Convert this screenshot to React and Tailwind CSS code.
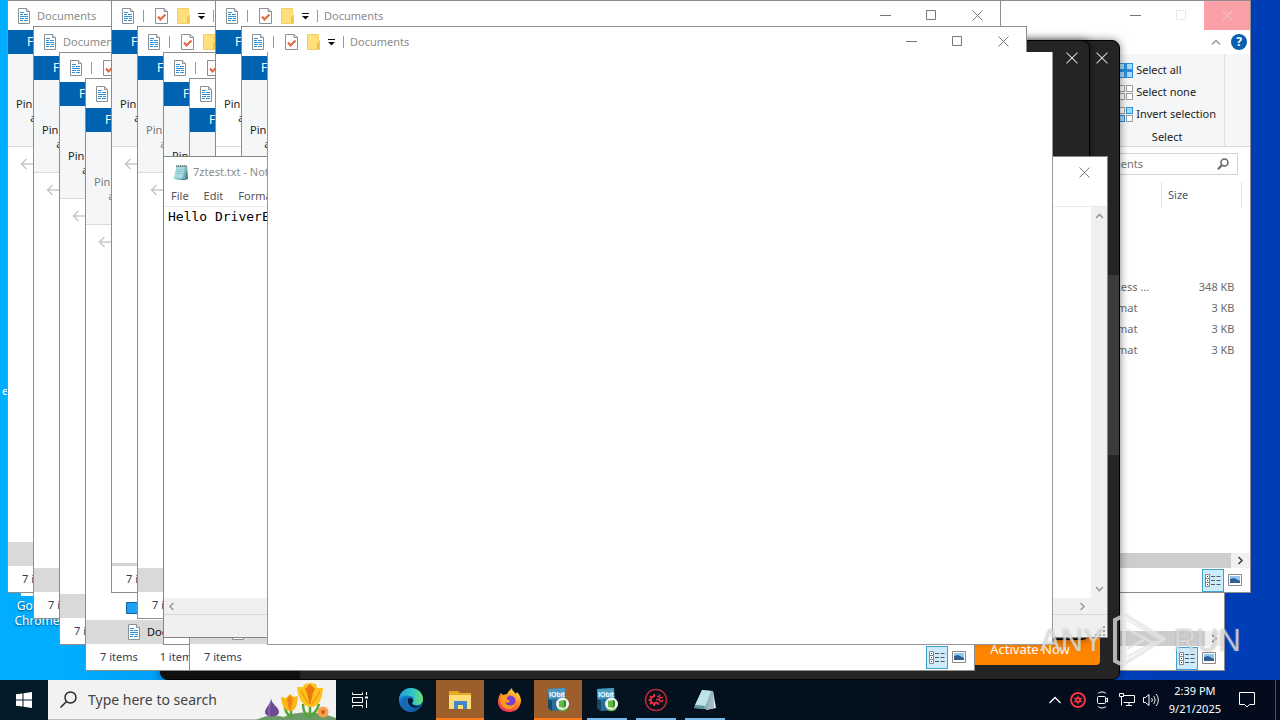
import React from "react";

const DocIcon = () => (
  <svg width="14" height="16" viewBox="0 0 14 16" className="shrink-0" aria-hidden="true">
    <path d="M1.5 .5h8l3 3v12h-11z" fill="#fff" stroke="#8a8f94" />
    <path d="M9.500.5v3h3" fill="#e4e8eb" stroke="#8a8f94" />
    <path d="M3 4.500h4M3 6.500h3M7 6.500h4M3 8.500h8M3 10.500h4M8 10.500h3M3 12.500h3M7 12.500h4" stroke="#2f8fd6" />
  </svg>
);

const CheckIcon = () => (
  <svg width="13" height="16" viewBox="0 0 13 16" className="shrink-0" aria-hidden="true">
    <path d="M.5 .5h8.500l3.500 3v12H.5z" fill="#fdfdfd" stroke="#8a8f94" />
    <path d="M9 .5v3h3.500" fill="none" stroke="#8a8f94" />
    <path d="M3 8.500l2.500 3 5-5" fill="none" stroke="#e0683f" strokeWidth="2" />
  </svg>
);

const FolderIcon = () => (
  <svg width="13" height="16" viewBox="0 0 13 16" className="shrink-0" aria-hidden="true">
    <path d="M.5 .5h11v5l1 1v9H.5z" fill="#ffe07c" stroke="#f2cf62" />
    <path d="M10 15V9l2-2v8z" fill="#f0c545" />
  </svg>
);

const MinGlyph = () => (
  <svg width="11" height="11" viewBox="0 0 11 11" aria-hidden="true">
    <path d="M0 5.500h11" stroke="currentColor" />
  </svg>
);
const MaxGlyph = () => (
  <svg width="11" height="11" viewBox="0 0 11 11" aria-hidden="true">
    <path d="M.5.5h9v9h-9z" fill="none" stroke="currentColor" />
  </svg>
);
const CloseGlyph = ({ size = 11 }) => (
  <svg width={size} height={size} viewBox="0 0 11 11" aria-hidden="true">
    <path d="M.5.5l10 10M10.500.5l-10 10" stroke="currentColor" fill="none" />
  </svg>
);

const Chevron = ({ d, className = "text-[#9b9b9b]" }) => (
  <svg width="9" height="9" viewBox="0 0 9 9" className={className} aria-hidden="true">
    <path d={d} fill="none" stroke="currentColor" strokeWidth="1.600" />
  </svg>
);
const LEFT = "M6.500 1L3 4.500 6.500 8";
const RIGHT = "M2.500 1L6 4.500 2.500 8";
const UP = "M1 6L4.500 2.500 8 6";
const DOWN = "M1 3L4.500 6.500 8 3";

function Caption({ hot }) {
  return (
    <div className="ml-auto flex h-full shrink-0 text-[#777]">
      <button aria-label="Minimize" className="grid w-[45px] place-items-center"><MinGlyph /></button>
      <button aria-label="Maximize" className={hot ? "grid w-[46px] place-items-center text-[#e8e8e8]" : "grid w-[46px] place-items-center"}><MaxGlyph /></button>
      <button aria-label="Close" className={hot ? "grid w-[46px] place-items-center bg-[#f9a0a8] text-[#f7c9cd]" : "grid w-[46px] place-items-center"}><CloseGlyph /></button>
    </div>
  );
}

function ViewButtons() {
  return (
    <div className="ml-auto flex h-full items-center">
      <button aria-label="Details" className="grid h-[23px] w-[22px] place-items-center border border-[#3f9fcf] bg-[#ccecfb]">
        <svg width="16" height="13" viewBox="0 0 16 13" aria-hidden="true">
          <path d="M.5.5h4v12h-4zM.5 4.500h4M.5 8.500h4" fill="#fff" stroke="#858585" />
          <path d="M2 2.500h1M2 6.500h1M2 10.500h1" stroke="#333" />
          <path d="M6 2.500h4M11.500 2.500h4M6 6.500h4M11.500 6.500h4M6 10.500h4M11.500 10.500h4" stroke="#555b66" />
        </svg>
      </button>
      <button aria-label="Large icons" className="mr-1 grid h-[23px] w-[22px] place-items-center">
        <svg width="14" height="12" viewBox="0 0 14 12" aria-hidden="true">
          <path d="M.5.5h13v11H.5z" fill="#fff" stroke="#8a8a8a" />
          <path d="M2 2h10v7H2z" fill="#8fc8ee" />
          <path d="M2 5l4-1 6 3v2H2z" fill="#2d5f92" />
        </svg>
      </button>
    </div>
  );
}

function Explorer({ place, compact, dim, plain, bare, hideSelection, line, selected, note, hot, children }) {
  return (
    <section className={`absolute flex h-[593px] w-[786px] flex-col overflow-hidden border border-[#8d8d8d] bg-white text-[11px] leading-4 ${place}`}>
      <header className="flex h-[29px] shrink-0 items-center pl-[9px] text-[#8c8c8c]">
        <DocIcon />
        {!compact && (
          <div className="flex items-center">
            <i className="ml-2 h-3 w-px bg-[#999]" />
            <button aria-label="Properties" className="ml-[11px]"><CheckIcon /></button>
            <button aria-label="New folder" className="ml-[9px]"><FolderIcon /></button>
            <button aria-label="Customize toolbar" className="ml-2">
              <svg width="7" height="8" viewBox="0 0 7 8" aria-hidden="true"><path d="M0 1.500h7" stroke="#111" /><path d="M0 4h7L3.500 7.500z" fill="#111" /></svg>
            </button>
            <i className="ml-2 h-3 w-px bg-[#999]" />
          </div>
        )}
        <span className="ml-1.5">Documents</span>
        <Caption hot={hot} />
      </header>
      <div className="flex h-6 shrink-0 items-center bg-white">
        <button className="h-full w-14 bg-[#0063b1] pl-[19px] text-left text-[12px] text-white">File</button>
        {hot && (
          <div className="ml-auto flex items-center gap-2.5 pr-[3px]">
            <svg width="10" height="7" viewBox="0 0 10 7" fill="none" stroke="#999" strokeWidth="1.500" aria-hidden="true"><path d="M1 5.500l4-4 4 4" /></svg>
            <button aria-label="Help" className="grid size-4 place-items-center rounded-full bg-[#0b5fae] text-[12px] font-bold text-white">?</button>
          </div>
        )}
      </div>
      <div className={`flex h-[93px] shrink-0 border-b border-[#d8dadc] ${plain ? "bg-white" : "bg-[#f5f6f7]"} ${dim ? "text-[#777]" : "text-[#222]"}`}>
        {!bare && <button className="mt-[43px] ml-1 h-fit w-[70px] text-center leading-[14px]">Pin to Quick access</button>}
        {hot && (
          <div className="ml-auto flex">
            <div className="flex flex-col border-r border-[#dfe1e3] pt-[5px] pr-2">
              <SelectItem kind="all" label="Select all" />
              <SelectItem kind="none" label="Select none" />
              <SelectItem kind="invert" label="Invert selection" />
              <p className="pt-1 text-center">Select</p>
            </div>
            <div className="w-[25px]" />
          </div>
        )}
      </div>
      <div className="flex h-[34px] shrink-0 items-center pl-3">
        <button aria-label="Back">
          <svg width="14" height="12" viewBox="0 0 14 12" aria-hidden="true"><path d="M14 6H1.500M6.500 1l-5 5 5 5" fill="none" stroke="#c8c8c8" strokeWidth="1.500" /></svg>
        </button>
        {hot && (
          <label className="mr-3 ml-auto flex h-[22px] w-[210px] items-center border border-[#d3d3d3] pr-2 pl-[17px]">
            <input aria-label="Search Documents" placeholder="Search Documents" className="min-w-0 flex-1 bg-transparent placeholder:text-[#777] placeholder:opacity-100" />
            <svg width="12" height="12" viewBox="0 0 12 12" aria-hidden="true"><circle cx="7.500" cy="4.500" r="3.500" fill="none" stroke="#666" strokeWidth="1.500" /><path d="M5 7L1 11.200" stroke="#666" strokeWidth="2" /></svg>
          </label>
        )}
      </div>
      <div className="flex min-h-0 flex-1 flex-col">
        {children}
        {!hideSelection && (
          <div className="mt-auto w-[141px]">
            {selected && (
              <div className="flex h-6 items-center pl-10">
                <svg width="14" height="12" viewBox="0 0 14 12" aria-hidden="true"><path d="M.5.5h13v11H.5z" fill="#1e9ef5" stroke="#12629c" /></svg>
              </div>
            )}
            <div className="flex h-6 items-center gap-1.5 bg-[#d9d9d9] pl-[41px] text-[#111]">
              {selected && <DocIcon />}
              {note && <span>Documents</span>}
            </div>
          </div>
        )}
        {line && <div className="mt-auto h-[3px] bg-[#d4d4d4]" />}
      </div>
      <footer className={`flex shrink-0 items-center gap-[22px] pl-3.5 text-[#333c58] ${hot === undefined ? "h-[26px]" : "h-6"}`}>
        <span>7 items</span>
        {note && <span>{note}</span>}
        <ViewButtons />
      </footer>
    </section>
  );
}

function SelectItem({ kind, label }) {
  const on = "#a8dafa", off = "#fff";
  const f = kind === "all" ? [on, on, on, on] : kind === "none" ? [off, off, off, off] : [off, on, on, off];
  return (
    <button className="flex h-[22px] items-center gap-[3px] text-left">
      <svg width="15" height="15" viewBox="0 0 15 15" aria-hidden="true">
        {kind === "all" && <path d="M0 0h15v15H0z" fill="#2d8fdb" />}
        {f.map((c, i) => (
          <rect key={i} x={(i % 2) * 8 + 0.5} y={Math.floor(i / 2) * 8 + 0.5} width="6" height="6" fill={c} stroke={c === on ? "#2d8fdb" : "#a0a0a0"} />
        ))}
      </svg>
      {label}
    </button>
  );
}

const FILES = [
  ["File folder", ""], ["File folder", ""], ["File folder", ""],
  ["Microsoft Access ...", "348 KB"],
  ["Rich Text Format", "3 KB"], ["Rich Text Format", "3 KB"], ["Rich Text Format", "3 KB"],
];

function HScroll() {
  return (
    <div className="mt-auto flex h-[15px] shrink-0 bg-[#f0f0f0]">
      <div className="flex-1 bg-[#cdcdcd]" />
      <button aria-label="Scroll right" className="grid w-[19px] place-items-center"><Chevron d={RIGHT} className="text-[#444]" /></button>
    </div>
  );
}

function FileTable() {
  return (
    <table className="mt-px mr-2 ml-auto border-collapse text-[#6b6b6b]">
      <thead>
        <tr className="h-[26px] text-[#44587c]">
          <th className="w-[116px] pl-1.5 text-left font-normal">Type</th>
          <th className="w-20 border-x border-[#e2e2e2] pl-1.5 text-left font-normal">Size</th>
        </tr>
      </thead>
      <tbody>
        <tr className="h-[5px]"><td colSpan={2} /></tr>
        {FILES.map(([type, size], i) => (
          <tr key={i} className="h-[21px]">
            <td className="pl-1.5">{type}</td>
            <td className="pr-[7px] text-right">{size}</td>
          </tr>
        ))}
      </tbody>
    </table>
  );
}

function DarkWindow({ place, children }) {
  return (
    <section className={`absolute flex w-[960px] flex-col overflow-hidden rounded-lg border border-black bg-[#242424] shadow-[0_0_8px_rgba(0,0,0,0.5)] ${place}`}>
      <header className="flex h-9 shrink-0 justify-end pt-[11px] pr-[11px] text-[#d0d0d0]">
        <button aria-label="Close" className="h-fit"><CloseGlyph size={12} /></button>
      </header>
      {children}
    </section>
  );
}

function NotepadIcon({ className }) {
  return (
    <svg viewBox="0 0 18 18" className={className} aria-hidden="true">
      <path d="M5 2h11l-1.500 14H2z" fill="#6fb4bd" />
      <path d="M5 3h9L11 15H2z" fill="#a7dce0" />
      <path d="M16 3l1 13-3 1-11-.5 11-.8z" fill="#477f88" />
      <path d="M5 1v2M7 1v2M9 1v2M11 1v2M13 1v2M15 1v2" stroke="#666" />
      <path d="M5 6h8M4.500 8h8M4 10h8" stroke="#82c2ca" strokeWidth=".7" />
    </svg>
  );
}

function NotepadTaskIcon() {
  return (
    <svg width="24" height="24" viewBox="0 0 24 24" aria-hidden="true">
      <path d="M9 2l11 1-7 18L1 20z" fill="#8fc4cc" />
      <path d="M9 2l9 1-6 15-10-1z" fill="#bfe3e6" />
      <path d="M2 17l10 1-1 3L1 20z" fill="#5c929c" />
      <path d="M20 3l3 17-10 2z" fill="#e3eef0" />
      <path d="M20 3l1 17-8 2z" fill="#a3b9bd" />
    </svg>
  );
}

function Notepad() {
  return (
    <section className="absolute top-[156px] left-[163px] flex h-[482px] w-[945px] flex-col border border-[#858585] bg-white text-[12px]">
      <header className="flex h-[30px] shrink-0 items-center pl-2 text-[11px] text-[#8c8c8c]">
        <NotepadIcon className="size-[17px]" />
        <span className="ml-1">7ztest.txt - Notepad</span>
        <Caption />
      </header>
      <nav className="flex h-5 shrink-0 items-center gap-[15px] border-b border-[#ececec] pl-[7px] text-[11px] text-[#555]">
        {["File", "Edit", "Format", "View", "Help"].map((m) => <button key={m}>{m}</button>)}
      </nav>
      <div className="flex min-h-0 flex-1">
        <textarea aria-label="Text editor" readOnly value="Hello DriverEasy" className="flex-1 resize-none bg-white px-1 pt-px font-['DejaVu_Sans_Mono',monospace] text-[13px] leading-[17px] text-black outline-none" />
        <div className="flex w-4 flex-col items-center justify-between bg-[#f0f0f0] py-[5px]">
          <Chevron d={UP} /><Chevron d={DOWN} />
        </div>
      </div>
      <div className="flex h-4 shrink-0 items-center justify-between bg-[#f0f0f0] pr-5 pl-[3px]">
        <Chevron d={LEFT} /><Chevron d={RIGHT} />
      </div>
      <footer className="flex h-[23px] shrink-0 items-end justify-end border-t border-[#d7d7d7] bg-[#f0f0f0] p-px">
        <svg width="11" height="11" viewBox="0 0 11 11" aria-hidden="true"><path d="M9 1v2M9 5v2M9 9v2M5 5v2M5 9v2M1 9v2" stroke="#aaa" strokeWidth="2" /></svg>
      </footer>
    </section>
  );
}

const Edge = () => (
  <svg width="26" height="26" viewBox="0 0 26 26" aria-hidden="true">
    <defs>
      <linearGradient id="eg" x1="0" x2="1"><stop offset="0" stopColor="#1c9de0" /><stop offset=".6" stopColor="#34c9c0" /><stop offset="1" stopColor="#6fe068" /></linearGradient>
      <linearGradient id="eb" x1="0" y1="0" x2="1" y2="1"><stop offset="0" stopColor="#1b8fe0" /><stop offset="1" stopColor="#0c4f98" /></linearGradient>
    </defs>
    <circle cx="13" cy="13" r="12" fill="url(#eb)" />
    <path d="M1 12C2 5 7 1 13 1c7 0 12 5 12 11 0 4-3 6-6 6-3 0-5-1-4-3 2-3 0-6-4-6-4-1-8 0-10 3z" fill="url(#eg)" />
    <path d="M10 12c-1 6 4 10 11 8l3-2c-1 1-7 3-10-1-1-1 1-2 1-4-1-2-4-3-5-1z" fill="#031621" />
    <path d="M10 11c-4 4-2 12 5 14-8 0-12-4-12-8 0-4 4-6 7-6z" fill="#1668b4" />
  </svg>
);
const ExplorerIcon = () => (
  <svg width="24" height="22" viewBox="0 0 24 22" aria-hidden="true">
    <path d="M1 2h9l2 2h11v16H1z" fill="#e6a91f" />
    <path d="M1 6h22v14H1z" fill="#ffdc76" />
    <path d="M6 12h13v8h-4v-4h-5v4H6z" fill="#3f87c9" />
  </svg>
);
const Firefox = () => (
  <svg width="25" height="25" viewBox="0 0 25 25" aria-hidden="true">
    <defs><linearGradient id="ff" x1=".8" y1="0" x2=".3" y2="1"><stop offset="0" stopColor="#ffe14a" /><stop offset=".5" stopColor="#ff8a1e" /><stop offset="1" stopColor="#f0275e" /></linearGradient></defs>
    <path d="M4 5l2 2 4-1 2-3 3-3c0 3 3 4 4 6l1-2c4 4 5 9 3 13-2 5-6 7-11 7C6 24 1 20 1 14c0-4 1-6 3-9z" fill="url(#ff)" />
    <circle cx="13" cy="13" r="5.500" fill="#7a3fd0" />
    <path d="M4 8c3-2 6-1 8 1-3 0-3 2-1 3l2 1c-1 2-4 2-5 1 1 4 7 5 10 1 0 5-4 7-8 6-5-1-8-7-6-13z" fill="#ff9a20" />
  </svg>
);
const Iobit = () => (
  <svg width="24" height="26" viewBox="0 0 24 26" aria-hidden="true">
    <path d="M2 2l17-1 2 22-15 1-4-3z" fill="#286f98" />
    <path d="M2 2l17-1v10L3 12z" fill="#4a9bc4" />
    <path d="M2 12l4 2v10l-4-3z" fill="#174865" />
    <text x="3" y="10" fontSize="7" fontWeight="700" fill="#fff" fontFamily="Liberation Sans, sans-serif">IObit</text>
    <circle cx="16.500" cy="17" r="6.500" fill="#f1f5f0" />
    <path d="M13 14l5-1v8l-5-1z" fill="#5cba45" />
    <path d="M18 13l2 1v5l-2 2z" fill="#2d8a1e" />
    <path d="M12 22a6.500 6.500 0 0 0 9-.5" fill="none" stroke="#62b94a" strokeWidth="1.500" />
  </svg>
);
const DriverGear = () => (
  <svg width="24" height="24" viewBox="0 0 24 24" fill="none" stroke="#e02f38" aria-hidden="true">
    <circle cx="12" cy="12" r="10.500" strokeWidth="1.500" stroke="#b92932" />
    <path d="M10 8.500a3.500 3.500 0 1 0 3 5.500" strokeWidth="2.200" />
    <path d="M10 6v3M10 15v3M4.500 12h3M6 8l2 2M6 16l2-2M13 14.500l2 2" strokeWidth="2" />
    <path d="M12 11.500h3l1-2h3M15 11.500l1.500 2H18l1-2M13 8.500h2l1-2" strokeWidth="1.500" />
  </svg>
);

const APPS = [
  { name: "Microsoft Edge", icon: <Edge />, bar: "bg-transparent" },
  { name: "File Explorer", icon: <ExplorerIcon />, bar: "bg-[#ff7a17]", active: true },
  { name: "Firefox", icon: <Firefox />, bar: "bg-transparent" },
  { name: "IObit setup", icon: <Iobit />, bar: "bg-[#ff7a17]", active: true },
  { name: "IObit", icon: <Iobit />, bar: "bg-[#76b9ed]" },
  { name: "Driver Easy", icon: <DriverGear />, bar: "bg-[#76b9ed]" },
  { name: "Notepad", icon: <NotepadTaskIcon />, bar: "bg-[#76b9ed]" },
];

const Flowers = () => (
  <svg width="80" height="40" viewBox="0 0 80 40" aria-hidden="true">
    <path d="M0 40c12-6 20-5 28-3 12-6 34-6 52 1v2z" fill="#6d9b68" />
    <path d="M35 38V26M54 38V22M54 36c5-3 8-8 9-12M35 37c-4-3-6-6-6-10M52 37c-3-3-5-8-5-13" stroke="#55a536" strokeWidth="2.500" fill="none" />
    <path d="M15 18c0 6 8 9 8 14 0 6-14 6-14 0 0-4 6-8 6-14z" fill="#6c4a93" />
    <path d="M15 23c-2 5-3 8-1 13" stroke="#9b7cba" fill="none" />
    <path d="M25 17l5 1 4-4 4 3 4-1c-1 9-2 15-8 15s-8-6-9-14z" fill="#fbb813" />
    <path d="M31 19l3-4 3 4-2 11h-2z" fill="#ef8416" />
    <path d="M41 7l6 0 2-3 6-1 5 1 1 4 6 0c-1 13-5 19-12 19S42 20 41 7z" fill="#fdc21b" />
    <path d="M49 9l5-5 5 5-2 4-3 13-3-13z" fill="#ee7814" />
    <path d="M45 11c3 5 4 8 8 13M64 11c-3 5-4 8-8 13" stroke="#f59b13" fill="none" strokeWidth="1.500" />
    <circle cx="67" cy="32" r="5.500" fill="#f6a24b" /><circle cx="67" cy="32" r="2" fill="#c95d1c" />
  </svg>
);

function Taskbar() {
  return (
    <footer className="absolute inset-x-0 bottom-0 z-30 flex h-10 bg-linear-to-r from-[#021c27] via-[#03121e] to-[#030b1c] text-white">
      <button aria-label="Start" className="grid w-12 shrink-0 place-items-center">
        <svg width="16" height="16" viewBox="0 0 16 16" fill="#fff" aria-hidden="true"><path d="M0 2.300L6.500 1.400v6.100H0zM7.500 1.200L16 0v7.500H7.500zM0 8.500h6.500v6.100L0 13.700zM7.500 8.500H16V16l-8.500-1.200z" /></svg>
      </button>
      <label className="flex w-72 shrink-0 items-center border-b border-[#bbb] bg-[#f2f2f2] pl-3">
        <svg width="17" height="17" viewBox="0 0 17 17" fill="none" stroke="#222" strokeWidth="1.400" aria-hidden="true"><circle cx="10.500" cy="6.500" r="5.500" /><path d="M6.500 10.500L.5 16.500" /></svg>
        <input aria-label="Type here to search" placeholder="Type here to search" className="ml-[11px] h-[22px] min-w-0 flex-1 bg-transparent text-[14px] outline-none placeholder:text-[#444] placeholder:opacity-100" />
        <Flowers />
      </label>
      <button aria-label="Task view" className="mr-[3px] grid w-12 shrink-0 place-items-center">
        <svg width="16" height="16" viewBox="0 0 16 16" fill="none" stroke="#fff" aria-hidden="true"><path d="M.5.5v2h10v-2M.5 5.500h10v5H.5zM.5 15.500v-2h10v2M14.500 0v3M14.500 8v8" /><path d="M13 4.500h3v2h-3z" fill="#fff" stroke="none" /></svg>
      </button>
      <nav className="flex gap-px">
        {APPS.map((a) => (
          <button key={a.name} aria-label={a.name} className={a.active ? "flex w-12 flex-col items-center bg-[#9c5f2b]" : "flex w-12 flex-col items-center"}>
            <span className="grid w-full flex-1 place-items-center pt-0.5">{a.icon}</span>
            <span className={`h-0.5 ${a.active ? "w-full" : "w-10"} ${a.bar}`} />
          </button>
        ))}
      </nav>
      <div className="ml-auto flex items-center">
        <div className="flex items-center gap-2">
          <svg width="12" height="8" viewBox="0 0 12 8" fill="none" stroke="#fff" strokeWidth="1.300" aria-hidden="true"><path d="M.5 7L6 1.500 11.500 7" /></svg>
          <svg width="18" height="18" viewBox="0 0 18 18" fill="none" stroke="#ef343f" aria-hidden="true"><circle cx="9" cy="9" r="7" strokeWidth="2" /><circle cx="9" cy="9" r="2" strokeWidth="2" /><path d="M9 4.500v9M5 7l8 4M5 11l8-4" strokeWidth="1.200" /><circle cx="9" cy="9" r="1" fill="#030d1c" stroke="none" /></svg>
          <svg width="16" height="18" viewBox="0 0 16 18" fill="none" stroke="#fff" aria-hidden="true"><rect x="2.500" y="5.500" width="8" height="7" rx="1" /><path d="M10.500 8.500l2-1.500v4l-2-1.500M3 2.500c2-2 6-2 8 0M3 15.500c2 2 6 2 8 0" /></svg>
          <svg width="16" height="14" viewBox="0 0 16 14" fill="none" stroke="#fff" aria-hidden="true"><path d="M4.500 2.500h11v7H4.500M.5.5h4v3h-4zM2.500 3.500v9M7 12.500h6M10 9.500v3" /></svg>
          <svg width="17" height="14" viewBox="0 0 17 14" fill="none" stroke="#fff" aria-hidden="true"><path d="M.5 4.500h2l3.500-3v11l-3.500-3h-2zM8.500 5c1 1 1 3 0 4M10.500 3c2 2 2 6 0 8M13 1c3 3 3 9 0 12" /></svg>
        </div>
        <p className="ml-[9px] text-center text-[11px] leading-[18px]">2:39 PM<br />9/21/2025</p>
        <button aria-label="Notifications" className="ml-[18px] h-fit">
          <svg width="16" height="16" viewBox="0 0 16 16" fill="none" stroke="#fff" aria-hidden="true"><path d="M.5.5h15v12h-5L8 15l-2.500-2.500h-5z" /></svg>
        </button>
        <i className="ml-5 h-full w-px bg-[#4a5060]" />
        <span className="w-1" />
      </div>
    </footer>
  );
}

export default function App() {
  return (
    <main className="relative h-screen min-h-[720px] overflow-hidden bg-linear-to-r from-[#00adff] from-5% via-[#0070e0] via-40% to-[#003eb8] to-90% font-['Noto_Sans','Open_Sans',sans-serif]">
      <div className="absolute top-[383px] left-0.5 text-[11px] leading-[15px] text-white">e</div>
      <div className="absolute top-[560px] left-1 flex w-[66px] flex-col items-center text-center text-[12px] leading-[15px] text-white [text-shadow:0_1px_2px_#0008]">
        <svg width="40" height="38" viewBox="0 0 40 38" aria-hidden="true"><circle cx="20" cy="18" r="18" fill="#1b8d4c" /><path d="M4 36v-7h12v7z" fill="#fff" /></svg>
        Google Chrome
      </div>

      <Explorer place="left-[439px] top-[78px]" hot={false} hideSelection bare><HScroll /></Explorer>
      <Explorer place="left-[465px] top-0" hot hideSelection bare><FileTable /><HScroll /></Explorer>

      <DarkWindow place="left-[160px] top-[40px] h-[640px]">
        <div className="flex min-h-0 flex-1">
          <div className="w-[139px] bg-[#101010]" />
          <div className="ml-auto flex items-end pb-3.5">
            <button className="h-9 w-[140px] rounded-sm bg-[#ff8400] pt-1.5 text-[13px] text-white">Activate Now</button>
          </div>
          <div className="ml-2 w-[11px] pt-[198px]"><div className="h-[180px] bg-[#3b3b3b]" /></div>
        </div>
      </DarkWindow>
      <DarkWindow place="left-[130px] top-[40px] h-[600px]" />

      <Explorer place="left-[7px] top-0" compact />
      <Explorer place="left-[33px] top-[26px]" compact />
      <Explorer place="left-[59px] top-[52px]" />
      <Explorer place="left-[85px] top-[78px]" dim selected note="1 item" />
      <Explorer place="left-[111px] top-0" hideSelection line />
      <Explorer place="left-[137px] top-[26px]" dim />
      <Explorer place="left-[163px] top-[52px]" />
      <Explorer place="left-[189px] top-[78px]" bare selected />
      <Explorer place="left-[215px] top-0" plain />
      <Explorer place="left-[241px] top-[26px]" />
      <Notepad />
      <section className="absolute top-[52px] left-[267px] h-[593px] w-[786px] border border-t-0 border-[#999] bg-white" />

      <div className="absolute top-[612px] left-[1040px] z-20 flex h-14 items-center gap-2 font-['Liberation_Sans',sans-serif] text-[31px] leading-none text-[#e4e4e4]/75 [text-shadow:0_0_2px_#8888]">
        <span>ANY</span>
        <svg width="54" height="58" viewBox="0 0 54 58" fill="none" stroke="currentColor" aria-hidden="true">
          <path d="M9 6L3 9v41l6 3" strokeWidth="4" />
          <path d="M12 3v50l40-25z" strokeWidth="3.500" />
          <path d="M15 9l33 19M15 18l28 15M15 46l29-16M15 38l20-11" strokeWidth="2" />
        </svg>
        <span>RUN</span>
      </div>
      <Taskbar />
    </main>
  );
}
